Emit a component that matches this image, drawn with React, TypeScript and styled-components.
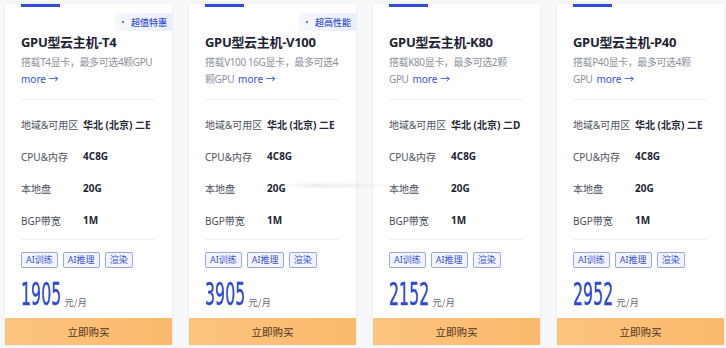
import styled, { createGlobalStyle } from "styled-components";

const GlobalStyle = createGlobalStyle`
  html, body {
    margin: 0;
    padding: 0;
    background: #f7f8fa;
    font-family: "Noto Sans", "Noto Sans CJK SC", sans-serif;
  }
`;

const Page = styled.div`
  position: relative;
  display: flex;
  gap: 17px;
  padding: 4px 0 0 5px;
  width: 726px;
  height: 348px;
  box-sizing: border-box;
  overflow: hidden;
`;

const Card = styled.div`
  position: relative;
  width: 167px;
  height: 341px;
  flex: none;
  background: #fff;
  box-shadow: 0 0 4px rgba(30, 40, 80, 0.06);
  display: flex;
  flex-direction: column;
  &::before {
    content: "";
    position: absolute;
    left: 16px;
    top: 0;
    width: 39px;
    height: 3px;
    background: #2f4fd8;
  }
`;

const Badge = styled.div`
  position: absolute;
  top: 9px;
  right: 0;
  height: 18px;
  padding: 0 5px 0 7px;
  display: flex;
  align-items: center;
  gap: 7px;
  font-size: 9px;
  font-weight: 500;
  color: #3552d9;
  background: linear-gradient(90deg, #f6f8fe, #e9eefc);
  font-family: "Noto Sans CJK SC", sans-serif;
  &::before {
    content: "";
    width: 2px;
    height: 2px;
    border-radius: 50%;
    background: #3552d9;
  }
`;

const Body = styled.div`
  flex: 1;
  padding: 0 17px 0 16px;
`;

const Title = styled.h3`
  margin: 28px 0 0;
  font-size: 13px;
  letter-spacing: -0.3px;
  font-weight: 700;
  line-height: 20px;
  color: #1e2433;
  white-space: nowrap;
`;

const Desc = styled.div`
  margin-top: 2px;
  height: 34px;
  font-size: 10px;
  line-height: 17px;
  color: #8d919c;
`;

const DescLine = styled.div`
  display: flex;
  gap: 4px;
  height: 17px;
  white-space: nowrap;
`;

const DescText = styled.span`
  letter-spacing: -0.4px;
`;

const More = styled.a`
  color: #3552d9;
  text-decoration: none;
`;

const Divider = styled.div<{ $gap?: number }>`
  height: 1px;
  background: #f0f1f4;
  margin-top: ${(p) => p.$gap ?? 0}px;
`;

const Specs = styled.div`
  display: flex;
  flex-direction: column;
  padding: 8px 0 3px;
`;

const Row = styled.div`
  display: flex;
  align-items: center;
  height: 32px;
  font-size: 10px;
  white-space: nowrap;
  overflow: hidden;
`;

const Label = styled.span`
  width: 62px;
  flex: none;
  color: #4d5260;
`;

const Value = styled.span`
  font-weight: 700;
  color: #1e2433;
`;

const Tags = styled.div`
  display: flex;
  gap: 5px;
  margin-top: 12px;
`;

const Tag = styled.span`
  height: 14px;
  padding: 0 4px;
  border: 1px solid #9aa8ea;
  border-radius: 2px;
  background: #f3f5fe;
  color: #3552d9;
  font-size: 9px;
  line-height: 14px;
`;

const PriceRow = styled.div`
  display: flex;
  align-items: flex-end;
  margin-top: 12px;
  height: 28px;
`;

const Price = styled.span`
  display: inline-block;
  font-family: "Liberation Sans Narrow", "DejaVu Sans Condensed", sans-serif;
  font-size: 32px;
  font-weight: 400;
  line-height: 28px;
  color: #2d49d6;
  -webkit-text-stroke: 0.4px #2d49d6;
  transform: scaleX(0.55);
  transform-origin: left bottom;
  margin-right: -32px;
`;

const Unit = styled.span`
  font-size: 9.5px;
  color: #666a75;
  margin-left: 2px;
  line-height: 12px;
  font-family: "Noto Sans CJK SC", sans-serif;
`;

const BuyButton = styled.button`
  height: 27px;
  flex: none;
  border: none;
  background: linear-gradient(90deg, #fbc47f, #fcb96b);
  color: #4a3520;
  font-size: 10.5px;
  font-family: "Noto Sans CJK SC", sans-serif;
  cursor: pointer;
`;

const Smudge = styled.div`
  position: absolute;
  left: 280px;
  top: 184px;
  width: 115px;
  height: 3px;
  background: linear-gradient(90deg, rgba(215,215,220,0), rgba(215,215,220,0.6) 30%, rgba(225,225,230,0.4) 80%, rgba(215,215,220,0));
  filter: blur(0.8px);
`;

type Plan = {
  name: string;
  desc: [string, string];
  badge?: string;
  zone: string;
  price: string;
};

const plans: Plan[] = [
  { name: "GPU型云主机-T4", desc: ["搭载T4显卡，最多可选4颗GPU", ""], badge: "超值特惠", zone: "华北 (北京) 二E", price: "1905" },
  { name: "GPU型云主机-V100", desc: ["搭载V100 16G显卡，最多可选4", "颗GPU"], badge: "超高性能", zone: "华北 (北京) 二E", price: "3905" },
  { name: "GPU型云主机-K80", desc: ["搭载K80显卡，最多可选2颗", "GPU"], zone: "华北 (北京) 二D", price: "2152" },
  { name: "GPU型云主机-P40", desc: ["搭载P40显卡，最多可选4颗", "GPU"], zone: "华北 (北京) 二E", price: "2952" },
];

export default function App() {
  return (
    <>
      <GlobalStyle />
      <Page>
        {plans.map((p) => (
          <Card key={p.name}>
            {p.badge && <Badge>{p.badge}</Badge>}
            <Body>
              <Title>{p.name}</Title>
              <Desc>
                <DescLine>
                  <DescText>{p.desc[0]}</DescText>
                </DescLine>
                <DescLine>
                  {p.desc[1] && <DescText>{p.desc[1]}</DescText>}
                  <More href="#">more →</More>
                </DescLine>
              </Desc>
              <Divider $gap={11} />
              <Specs>
                <Row><Label>地域&amp;可用区</Label><Value>{p.zone}</Value></Row>
                <Row><Label>CPU&amp;内存</Label><Value>4C8G</Value></Row>
                <Row><Label>本地盘</Label><Value>20G</Value></Row>
                <Row><Label>BGP带宽</Label><Value>1M</Value></Row>
              </Specs>
              <Divider />
              <Tags>
                <Tag>AI训练</Tag>
                <Tag>AI推理</Tag>
                <Tag>渲染</Tag>
              </Tags>
              <PriceRow>
                <Price>{p.price}</Price>
                <Unit>元/月</Unit>
              </PriceRow>
            </Body>
            <BuyButton>立即购买</BuyButton>
          </Card>
        ))}
        <Smudge />
      </Page>
    </>
  );
}
